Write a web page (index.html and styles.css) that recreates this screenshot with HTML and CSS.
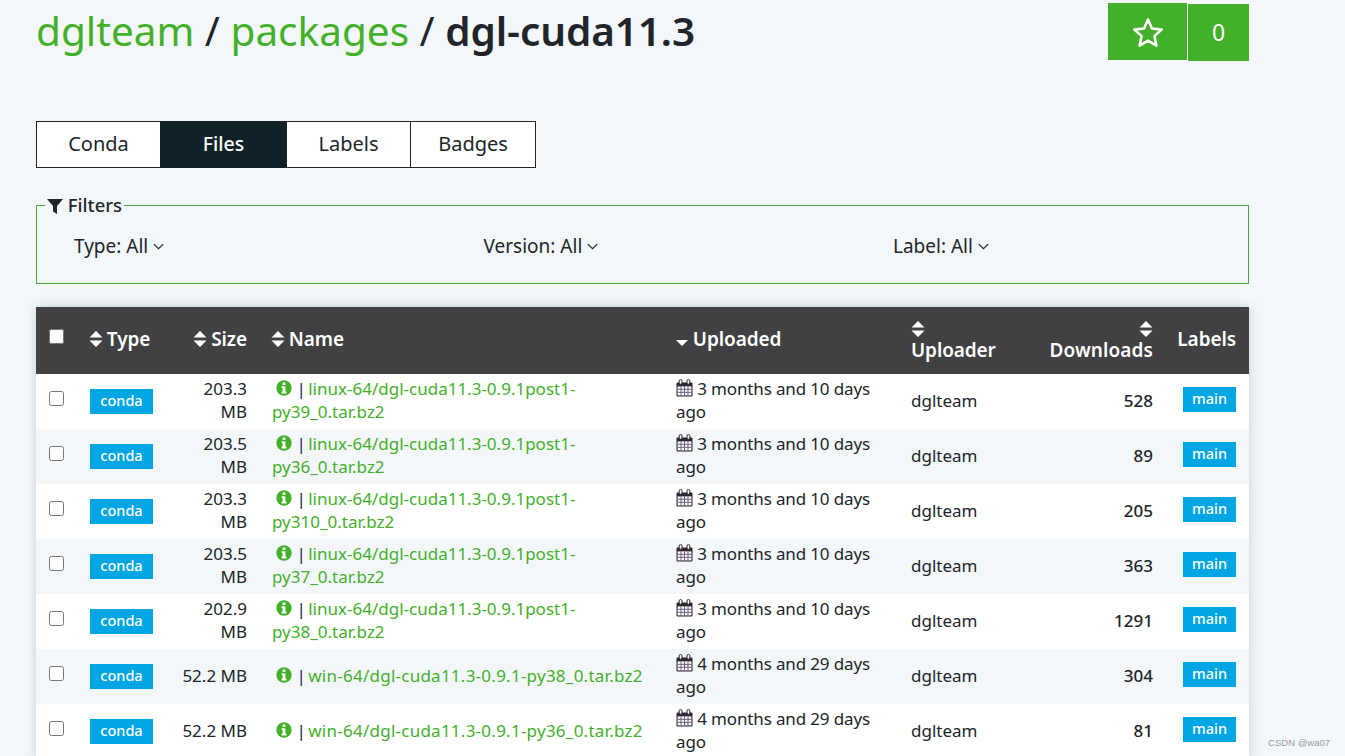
FILE: index.html
```html
<!DOCTYPE html>
<html lang="en">
<head>
<meta charset="utf-8">
<title>dgl-cuda11.3</title>
<link rel="stylesheet" href="styles.css">
</head>
<body>
<svg class="defs" width="0" height="0">
  <symbol id="sort" viewBox="0 0 14 16"><path d="M7 0l6.5 6.6H.5zM7 16L.5 9.4h13z" fill="currentColor"/></symbol>
  <symbol id="info" viewBox="0 0 16 16"><circle cx="8" cy="8" r="7.7" fill="#43b02a"/><path d="M6.6 2.4h2.8v2.5H6.6zM5.6 6.2h3.8v5.3h1v1.9H5.6v-1.9h1V8h-1z" fill="#fff"/></symbol>
  <symbol id="cal" viewBox="0 0 17 18"><path d="M1.5 3.4h14a1 1 0 0 1 1 1v12a1 1 0 0 1-1 1h-14a1 1 0 0 1-1-1v-12a1 1 0 0 1 1-1z" fill="#2e2530"/><path d="M1.6 7.4h13.8v9H1.6z" fill="#fff"/><path d="M5 7.4v9M8.5 7.4v9M12 7.4v9M1.6 10.3h13.8M1.6 13.3h13.8" stroke="#6a5a80" stroke-width="1"/><rect x="3.2" y=".6" width="2.8" height="4.6" rx="1.2" fill="#fff" stroke="#2e2530"/><rect x="11" y=".6" width="2.8" height="4.6" rx="1.2" fill="#fff" stroke="#2e2530"/></symbol>
  <symbol id="chev" viewBox="0 0 10 6"><path d="M.7.8L5 5l4.3-4.2" fill="none" stroke="currentColor" stroke-width="1.1"/></symbol>
</svg>
<main class="page">
  <header class="top">
    <h1 class="title"><a href="#">dglteam</a> / <a href="#">packages</a> / <strong>dgl-cuda11.3</strong></h1>
    <div class="stars">
      <button class="star"><svg width="32" height="30" viewBox="0 0 32 30"><path d="M16 2.6l4 8.9 9.6 1.1-7.2 6.5 2 9.5L16 23.7l-8.4 4.9 2-9.5-7.2-6.5 9.6-1.1z" fill="none" stroke="#fff" stroke-width="2.6" stroke-linejoin="round"/></svg></button>
      <span class="count">0</span>
    </div>
  </header>

  <nav class="tabs">
    <a href="#" class="tab">Conda</a><a href="#" class="tab tab-on">Files</a><a href="#" class="tab">Labels</a><a href="#" class="tab">Badges</a>
  </nav>

  <fieldset class="filters">
    <legend class="legend"><svg class="funnel" width="16" height="15" viewBox="0 0 16 15"><path d="M0 0h16L10 7v8L6 12.5V7z" fill="#212529"/></svg> Filters</legend>
    <div class="filter-row">
      <span class="filter">Type: All <svg class="chev"><use href="#chev"/></svg></span>
      <span class="filter">Version: All <svg class="chev"><use href="#chev"/></svg></span>
      <span class="filter">Label: All <svg class="chev"><use href="#chev"/></svg></span>
    </div>
  </fieldset>

  <table class="files">
    <colgroup>
      <col class="c-check"><col class="c-type"><col class="c-size"><col class="c-name"><col class="c-up"><col class="c-user"><col class="c-dl"><col class="c-label">
    </colgroup>
    <thead>
      <tr>
        <th><input type="checkbox" class="check check-head"></th>
        <th><svg class="sort"><use href="#sort"/></svg> Type</th>
        <th class="right"><svg class="sort"><use href="#sort"/></svg> Size</th>
        <th><svg class="sort"><use href="#sort"/></svg> Name</th>
        <th><span class="caret"></span> Uploaded</th>
        <th class="low"><svg class="sort sort-block"><use href="#sort"/></svg>Uploader</th>
        <th class="right low"><svg class="sort sort-block sort-end"><use href="#sort"/></svg>Downloads</th>
        <th class="right last">Labels</th>
      </tr>
    </thead>
    <tbody>
      <tr>
        <td><input type="checkbox" class="check"></td><td><span class="badge">conda</span></td><td class="right">203.3 MB</td>
        <td class="wrapped name"><svg class="info"><use href="#info"/></svg> <span class="pipe">|</span> <a href="#" class="file">linux-64/dgl-cuda11.3-0.9.1post1-py39_0.tar.bz2</a></td>
        <td class="wrapped when"><svg class="cal"><use href="#cal"/></svg> 3 months and 10 days ago</td><td>dglteam</td><td class="right num">528</td><td class="right last"><span class="badge badge-label">main</span></td>
      </tr>
      <tr>
        <td><input type="checkbox" class="check"></td><td><span class="badge">conda</span></td><td class="right">203.5 MB</td>
        <td class="wrapped name"><svg class="info"><use href="#info"/></svg> <span class="pipe">|</span> <a href="#" class="file">linux-64/dgl-cuda11.3-0.9.1post1-py36_0.tar.bz2</a></td>
        <td class="wrapped when"><svg class="cal"><use href="#cal"/></svg> 3 months and 10 days ago</td><td>dglteam</td><td class="right num">89</td><td class="right last"><span class="badge badge-label">main</span></td>
      </tr>
      <tr>
        <td><input type="checkbox" class="check"></td><td><span class="badge">conda</span></td><td class="right">203.3 MB</td>
        <td class="wrapped name"><svg class="info"><use href="#info"/></svg> <span class="pipe">|</span> <a href="#" class="file">linux-64/dgl-cuda11.3-0.9.1post1-py310_0.tar.bz2</a></td>
        <td class="wrapped when"><svg class="cal"><use href="#cal"/></svg> 3 months and 10 days ago</td><td>dglteam</td><td class="right num">205</td><td class="right last"><span class="badge badge-label">main</span></td>
      </tr>
      <tr>
        <td><input type="checkbox" class="check"></td><td><span class="badge">conda</span></td><td class="right">203.5 MB</td>
        <td class="wrapped name"><svg class="info"><use href="#info"/></svg> <span class="pipe">|</span> <a href="#" class="file">linux-64/dgl-cuda11.3-0.9.1post1-py37_0.tar.bz2</a></td>
        <td class="wrapped when"><svg class="cal"><use href="#cal"/></svg> 3 months and 10 days ago</td><td>dglteam</td><td class="right num">363</td><td class="right last"><span class="badge badge-label">main</span></td>
      </tr>
      <tr>
        <td><input type="checkbox" class="check"></td><td><span class="badge">conda</span></td><td class="right">202.9 MB</td>
        <td class="wrapped name"><svg class="info"><use href="#info"/></svg> <span class="pipe">|</span> <a href="#" class="file">linux-64/dgl-cuda11.3-0.9.1post1-py38_0.tar.bz2</a></td>
        <td class="wrapped when"><svg class="cal"><use href="#cal"/></svg> 3 months and 10 days ago</td><td>dglteam</td><td class="right num">1291</td><td class="right last"><span class="badge badge-label">main</span></td>
      </tr>
      <tr>
        <td><input type="checkbox" class="check"></td><td><span class="badge">conda</span></td><td class="right single">52.2 MB</td>
        <td class="name"><svg class="info"><use href="#info"/></svg> <span class="pipe">|</span> <a href="#" class="file win">win-64/dgl-cuda11.3-0.9.1-py38_0.tar.bz2</a></td>
        <td class="wrapped when"><svg class="cal"><use href="#cal"/></svg> 4 months and 29 days ago</td><td>dglteam</td><td class="right num">304</td><td class="right last"><span class="badge badge-label">main</span></td>
      </tr>
      <tr>
        <td><input type="checkbox" class="check"></td><td><span class="badge">conda</span></td><td class="right single">52.2 MB</td>
        <td class="name"><svg class="info"><use href="#info"/></svg> <span class="pipe">|</span> <a href="#" class="file win">win-64/dgl-cuda11.3-0.9.1-py36_0.tar.bz2</a></td>
        <td class="wrapped when"><svg class="cal"><use href="#cal"/></svg> 4 months and 29 days ago</td><td>dglteam</td><td class="right num">81</td><td class="right last"><span class="badge badge-label">main</span></td>
      </tr>
    </tbody>
  </table>
</main>
<span class="mark">CSDN @wa07</span>
</body>
</html>
```

FILE: styles.css
```css
* { box-sizing: border-box; }
html, body { height: 756px; overflow: hidden; }
body {
  margin: 0;
  background: #f3f7fa;
  color: #212529;
  font-family: "Noto Sans", "Open Sans", sans-serif;
  font-size: 17px;
  line-height: 23px;
}
a { color: #43b02a; text-decoration: none; }
.defs { position: absolute; }
.page { width: 1213px; margin-left: 36px; }

.top { display: flex; justify-content: space-between; align-items: flex-start; height: 121px; }
.title { margin: 7px 0 0; font-size: 40.5px; line-height: 48px; font-weight: 400; color: #212529; white-space: nowrap; }
.title strong { font-weight: 600; letter-spacing: -.1px; }
.stars { display: flex; margin-top: 3px; }
.star { width: 79px; height: 57px; background: #43b02a; border: 0; padding: 0; margin-right: 1px; display: flex; align-items: center; justify-content: center; }
.count { width: 61px; height: 57px; margin-top: 1px; background: #43b02a; color: #fff; font-size: 23px; display: flex; align-items: center; justify-content: center; }

.tabs { display: flex; height: 47px; width: 500px; }
.tab { width: 126px; padding-bottom: 2px; border: 1px solid #212529; margin-left: -1px; background: #fff; color: #212529; font-size: 20px; display: flex; align-items: center; justify-content: center; }
.tab:first-child { margin-left: 0; width: 125px; }
.tab:nth-child(3) { width: 125px; }
.tab-on { width: 127px; background: #0e2227; border-color: #0e2227; color: #fff; font-weight: 500; font-size: 19.5px; }

.filters { margin: 25px 0 0; padding: 0 0 0 37px; height: 91px; border: 1px solid #4aa83c; min-width: 0; }
.legend { padding: 0 2px 2px; margin-left: -29px; font-size: 18.5px; line-height: 23px; font-weight: 500; }
.funnel { vertical-align: -2px; }
.filter-row { display: grid; grid-template-columns: 409.5px 409.5px 1fr; margin-top: 16px; font-size: 19px; line-height: 24px; }
.chev { width: 11px; height: 7px; vertical-align: 3px; }

.files { margin-top: 23px; width: 1213px; table-layout: fixed; border-collapse: collapse; background: #fff; box-shadow: 0 0 10px rgba(120, 150, 165, .4); font-size: 17px; line-height: 23px; }
.c-check { width: 41px; } .c-type { width: 90px; } .c-size { width: 92px; } .c-name { width: 405px; }
.c-up { width: 235px; } .c-user { width: 110px; } .c-dl { width: 156px; } .c-label { width: 84px; }
thead tr { height: 67px; background: #414042; color: #fff; }
th { padding: 0 12px 4px; text-align: left; font-size: 19px; font-weight: 600; line-height: 22px; letter-spacing: -.1px; }
th.right, td.right { text-align: right; }
th.low { vertical-align: bottom; padding-bottom: 13px; }
th.low.right { letter-spacing: .1px; }
th.last, td.last { padding-right: 13px; }
tbody tr { height: 55px; }
tbody tr:nth-child(even) { background: #f3f7fa; }
td { padding: 0 12px 2px; vertical-align: middle; }
td.wrapped, td.right:nth-child(3) { padding-bottom: 4px; }
td.right.single { padding-bottom: 2px; }
td.name { padding-left: 13px; }
td.name .info { margin-left: 4px; }
td.when { letter-spacing: -.15px; }
td.num { font-weight: 500; }
.check { width: 15px; height: 15px; margin: 0 0 4px 1px; display: block; }
.sort { width: 14px; height: 16px; margin-right: -1px; vertical-align: -1px; color: #fff; }
.sort-block { display: block; margin-bottom: 2px; }
.sort-end { margin-left: auto; margin-right: 0; }
.caret { display: inline-block; width: 0; height: 0; border: 6.5px solid transparent; border-top-color: #fff; border-bottom: 0; vertical-align: 0; }
.badge { display: block; width: 63px; height: 25px; margin: 2px 0 0 1px; background: #00a5e3; color: #fff; font-size: 14.5px; line-height: 22px; font-weight: 500; text-align: center; }
.badge-label { width: 53px; margin: 0 0 2px auto; }
.info { width: 16px; height: 16px; vertical-align: -1px; }
.pipe { color: #1c2a4a; }
.file { margin-left: -2px; }
.win { letter-spacing: .25px; }
.cal { width: 17px; height: 18px; vertical-align: -2px; }
.mark { position: absolute; right: 15px; bottom: 7px; color: #9a9a9a; font-size: 9.5px; line-height: 12px; font-family: "Liberation Sans", sans-serif; }
```
